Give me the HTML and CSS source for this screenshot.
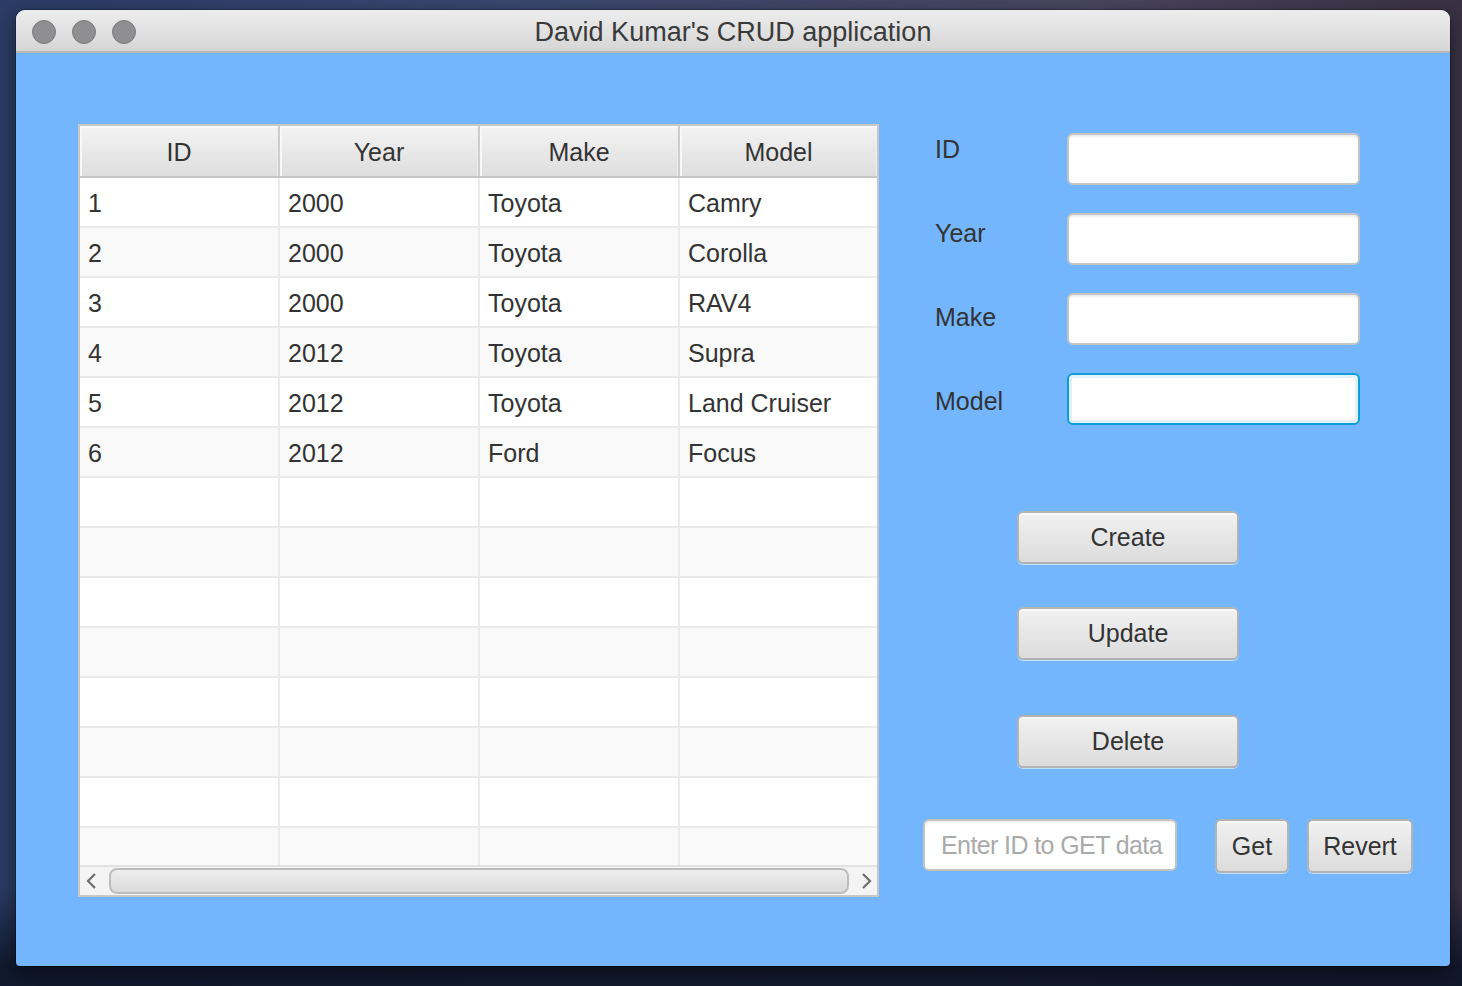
FILE: index.html
```html
<!DOCTYPE html>
<html>
<head>
<meta charset="utf-8">
<title>David Kumar's CRUD application</title>
<link rel="stylesheet" href="styles.css">
</head>
<body>
<div class="window">
  <div class="titlebar">
    <div class="lights">
      <span class="light"></span><span class="light"></span><span class="light"></span>
    </div>
    <div class="title">David Kumar's CRUD application</div>
    <div></div>
  </div>
  <div class="content">
    <div class="table">
      <div class="thead">
        <div class="th">ID</div><div class="th">Year</div><div class="th">Make</div><div class="th">Model</div>
      </div>
      <div class="tbody">
        <div class="tr"><div class="td">1</div><div class="td">2000</div><div class="td">Toyota</div><div class="td">Camry</div></div>
        <div class="tr"><div class="td">2</div><div class="td">2000</div><div class="td">Toyota</div><div class="td">Corolla</div></div>
        <div class="tr"><div class="td">3</div><div class="td">2000</div><div class="td">Toyota</div><div class="td">RAV4</div></div>
        <div class="tr"><div class="td">4</div><div class="td">2012</div><div class="td">Toyota</div><div class="td">Supra</div></div>
        <div class="tr"><div class="td">5</div><div class="td">2012</div><div class="td">Toyota</div><div class="td">Land Cruiser</div></div>
        <div class="tr"><div class="td">6</div><div class="td">2012</div><div class="td">Ford</div><div class="td">Focus</div></div>
        <div class="tr"><div class="td"></div><div class="td"></div><div class="td"></div><div class="td"></div></div>
        <div class="tr"><div class="td"></div><div class="td"></div><div class="td"></div><div class="td"></div></div>
        <div class="tr"><div class="td"></div><div class="td"></div><div class="td"></div><div class="td"></div></div>
        <div class="tr"><div class="td"></div><div class="td"></div><div class="td"></div><div class="td"></div></div>
        <div class="tr"><div class="td"></div><div class="td"></div><div class="td"></div><div class="td"></div></div>
        <div class="tr"><div class="td"></div><div class="td"></div><div class="td"></div><div class="td"></div></div>
        <div class="tr"><div class="td"></div><div class="td"></div><div class="td"></div><div class="td"></div></div>
        <div class="tr"><div class="td"></div><div class="td"></div><div class="td"></div><div class="td"></div></div>
      </div>
      <div class="scrollbar">
        <div class="arrow arrow-left">
          <svg width="12" height="18" viewBox="0 0 12 18"><polyline points="10,2 3,9 10,16" fill="none" stroke="#6e6e6e" stroke-width="2.2"/></svg>
        </div>
        <div class="thumb"></div>
        <div class="arrow arrow-right">
          <svg width="12" height="18" viewBox="0 0 12 18"><polyline points="2,2 9,9 2,16" fill="none" stroke="#6e6e6e" stroke-width="2.2"/></svg>
        </div>
      </div>
    </div>
    <div class="panel">
      <div class="form">
        <div class="labels">
          <div class="label">ID</div>
          <div class="label">Year</div>
          <div class="label">Make</div>
          <div class="label">Model</div>
        </div>
        <div class="fields">
          <input class="field" type="text">
          <input class="field" type="text">
          <input class="field" type="text">
          <input class="field focused" type="text">
        </div>
      </div>
      <div class="actions">
        <button class="btn btn-wide">Create</button>
        <button class="btn btn-wide btn-update">Update</button>
        <button class="btn btn-wide btn-delete">Delete</button>
      </div>
      <div class="getrow">
        <input class="field get-field" type="text" placeholder="Enter ID to GET data">
        <button class="btn btn-get">Get</button>
        <button class="btn btn-revert">Revert</button>
      </div>
    </div>
  </div>
</div>
</body>
</html>
```
FILE: styles.css
```css
* { box-sizing: border-box; }

body {
  margin: 0;
  width: 1462px;
  height: 986px;
  overflow: hidden;
  font-family: "Liberation Sans", Arial, sans-serif;
  background:
    linear-gradient(to bottom, rgba(0,0,0,0) 0%, rgba(0,0,0,0) 90%, rgba(14,22,42,0.92) 98%),
    linear-gradient(90deg, #2b3c66 0%, #3a4870 35%, #4a4660 75%, #3a3244 100%);
}

.window {
  margin: 10px 0 0 16px;
  width: 1434px;
  height: 956px;
  border-radius: 9px 9px 4px 4px;
  overflow: hidden;
  background: #73b6fd;
  box-shadow: 0 0 0 1px rgba(0,0,0,0.25), 0 6px 20px rgba(0,0,0,0.5);
}

.titlebar {
  height: 43px;
  border-bottom: 2px solid #b8b8b8;
  background: linear-gradient(#ededed, #d6d6d6);
  display: grid;
  grid-template-columns: 1fr auto 1fr;
  align-items: center;
}

.lights {
  display: flex;
  gap: 16px;
  padding-left: 16px;
  padding-top: 2px;
}

.light {
  width: 24px;
  height: 24px;
  border-radius: 50%;
  background: #8f8e91;
  border: 1px solid #7a797c;
}

.title {
  font-size: 27px;
  color: #3a3a3a;
  padding-top: 4px;
}

.content {
  display: flex;
  padding: 71px 0 0 62px;
}

/* table */
.table {
  width: 801px;
  height: 773px;
  border: 2px solid #c8c8c8;
  background: #fff;
  display: flex;
  flex-direction: column;
}

.thead {
  display: grid;
  grid-template-columns: 200px 200px 200px 197px;
  height: 52px;
  border-bottom: 2px solid #c6c6c6;
}

.th {
  background: linear-gradient(#f3f3f3, #dedede);
  border-right: 2px solid #cdcdcd;
  box-shadow: inset 2px 2px 0 #f8f8f8, inset -1px 0 0 #ececec;
  display: flex;
  align-items: center;
  justify-content: center;
  padding-top: 2px;
  font-size: 25px;
  color: #333;
}

.th:last-child { border-right: 0; }

.tbody {
  height: 687px;
  overflow: hidden;
}

.tr {
  display: grid;
  grid-template-columns: 200px 200px 200px 197px;
  height: 50px;
  border-bottom: 2px solid #ebebeb;
  background: #fff;
}

.tr:nth-child(even) { background: #f9f9f9; }

.td {
  border-right: 2px solid #ebebeb;
  padding-left: 8px;
  padding-top: 2px;
  display: flex;
  align-items: center;
  font-size: 25px;
  color: #333;
}

.td:last-child { border-right: 0; }

.scrollbar {
  height: 30px;
  border-top: 2px solid #e2e2e2;
  background: #f4f4f4;
  display: flex;
  align-items: center;
}

.arrow {
  display: flex;
  align-items: center;
  height: 100%;
}

.arrow-left { width: 29px; padding-left: 5px; }
.arrow-right { width: 28px; padding-left: 12px; }

.thumb {
  width: 740px;
  height: 26px;
  border: 2px solid #bdbdbd;
  border-radius: 8px;
  background: linear-gradient(#ededed, #dadada);
}

/* right panel */
.panel {
  margin-left: 44px;
  display: flex;
  flex-direction: column;
}

.form {
  display: flex;
  margin-top: 9px;
}

.labels {
  width: 144px;
  padding-left: 12px;
  padding-top: 1px;
  display: flex;
  flex-direction: column;
  gap: 54px;
}

.label {
  font-size: 25px;
  line-height: 30px;
  color: #333;
}

.fields {
  display: flex;
  flex-direction: column;
  gap: 28px;
}

.field {
  display: block;
  width: 293px;
  height: 52px;
  margin: 0;
  border: 2px solid #c4c4c4;
  border-radius: 6px;
  background: #fff;
  box-shadow: inset 0 3px 3px -2px rgba(0,0,0,0.12);
  font-family: "Liberation Sans", Arial, sans-serif;
  font-size: 25px;
  color: #333;
  padding: 0 16px;
  outline: none;
}

.field.focused {
  border-color: #0b9fd6;
  box-shadow: inset 0 0 0 3px #e0f1fb;
}

.field::placeholder { color: #aaaaaa; }

.actions {
  margin-left: 94px;
  margin-top: 86px;
  display: flex;
  flex-direction: column;
}

.btn {
  height: 53px;
  margin: 0;
  padding: 0;
  border: 2px solid #b3b3b3;
  border-radius: 6px;
  background: linear-gradient(#f1f1f1, #dcdcdc);
  box-shadow: inset 0 2px 0 #fafafa, 0 1px 0 rgba(255,255,255,0.55);
  font-family: "Liberation Sans", Arial, sans-serif;
  font-size: 25px;
  color: #333;
}

.btn-wide { width: 222px; }
.btn-update { margin-top: 43px; }
.btn-delete { margin-top: 55px; }

.getrow {
  margin-top: 51px;
  display: flex;
  align-items: flex-start;
}

.get-field {
  width: 254px;
  padding: 0 2px 0 16px;
  letter-spacing: -0.6px;
}

.btn-get {
  width: 74px;
  height: 54px;
  margin-left: 38px;
}

.btn-revert {
  width: 106px;
  height: 54px;
  margin-left: 18px;
}
```
